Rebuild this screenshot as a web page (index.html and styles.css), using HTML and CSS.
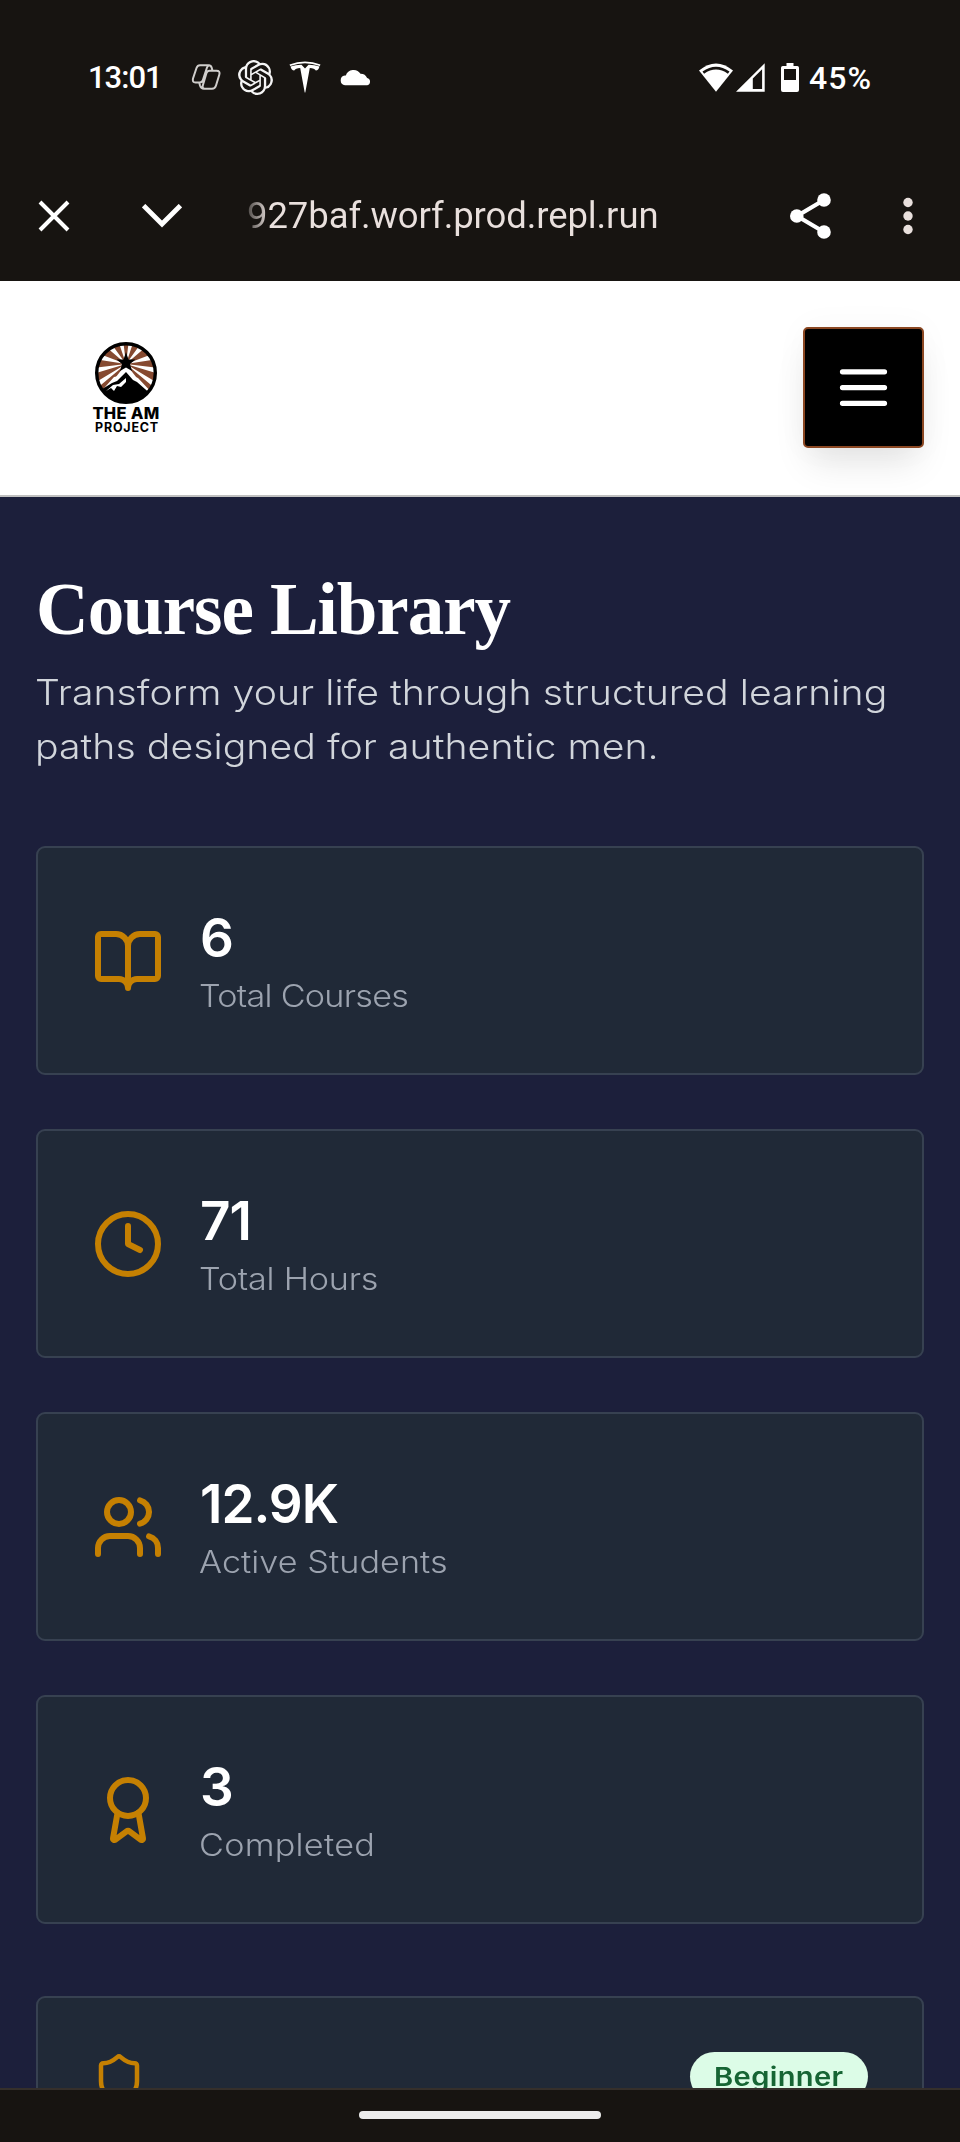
FILE: index.html
```html
<!DOCTYPE html>
<html lang="en">
<head>
<meta charset="utf-8">
<title>Course Library</title>
<link rel="stylesheet" href="styles.css">
</head>
<body>
<div class="screen">
  <div class="status">
    <span class="time">13:01</span>
    <svg class="st-copilot" width="30" height="28" viewBox="0 0 30 28" fill="none" stroke="#d0cecc" stroke-width="2" stroke-linejoin="round"><path d="M9 2.200h8.500q2.500 0 3.200 2.500l.8 3M9 2.200Q6.500 2.200 5.500 5L2 15.500q-1 4 2.500 4h4.200q2.400 0 3.200-2.500L16 4.500q.8-2.300 2.500-2.300M21.500 7.700h4q4 0 2.800 4L25 22.500q-1 3.300-4 3.300h-8q-3 0-4-3.300l-.8-3M21.500 7.700h-3q-2.300 0-3.100 2.500L11.800 22.500q-.8 3 1.700 3.300"/></svg>
    <svg class="st-openai" width="35" height="35" viewBox="0 0 24 24" fill="#f4f4f4"><path d="M22.282 9.821a5.985 5.985 0 0 0-.516-4.910 6.046 6.046 0 0 0-6.510-2.900A6.065 6.065 0 0 0 4.981 4.182a5.985 5.985 0 0 0-3.998 2.900 6.046 6.046 0 0 0 .743 7.097 5.980 5.980 0 0 0 .511 4.911 6.051 6.051 0 0 0 6.515 2.900A5.985 5.985 0 0 0 13.260 24a6.056 6.056 0 0 0 5.772-4.206 5.989 5.989 0 0 0 3.998-2.900 6.056 6.056 0 0 0-.748-7.073zm-9.022 12.608a4.476 4.476 0 0 1-2.876-1.041l.142-.080 4.778-2.758a.795.795 0 0 0 .393-.681v-6.737l2.020 1.169a.071.071 0 0 1 .038.052v5.583a4.504 4.504 0 0 1-4.495 4.494zm-9.661-4.125a4.471 4.471 0 0 1-.535-3.014l.142.085 4.783 2.758a.771.771 0 0 0 .781 0l5.843-3.369v2.332a.080.080 0 0 1-.033.062L9.740 19.950a4.499 4.499 0 0 1-6.141-1.646zM2.341 7.896a4.485 4.485 0 0 1 2.366-1.973V11.600a.766.766 0 0 0 .388.677l5.814 3.354-2.020 1.169a.076.076 0 0 1-.071 0l-4.830-2.787A4.504 4.504 0 0 1 2.341 7.872zm16.596 3.856L13.104 8.364 15.119 7.200a.076.076 0 0 1 .071 0l4.830 2.791a4.494 4.494 0 0 1-.677 8.104v-5.677a.790.790 0 0 0-.407-.667zm2.011-3.023l-.142-.085-4.774-2.782a.776.776 0 0 0-.785 0L9.409 9.230V6.897a.066.066 0 0 1 .028-.062l4.830-2.787a4.499 4.499 0 0 1 6.680 4.660zM8.307 12.863l-2.020-1.164a.080.080 0 0 1-.038-.057V6.074a4.499 4.499 0 0 1 7.376-3.454l-.142.081L8.704 5.459a.795.795 0 0 0-.393.681zm1.097-2.365l2.602-1.500 2.607 1.500v2.999l-2.597 1.500-2.607-1.500Z"/></svg>
    <svg class="st-tesla" width="32" height="32" viewBox="0 0 32 32" fill="#fff"><path d="M.5 3.500Q16-2.300 31.500 3.500L30.800 5Q16-.4 1.200 5ZM1.500 5.500Q7 3.700 12.500 3.800L16 7.500l3.500-3.700Q25 3.700 30.500 5.500q-1 3.800-3.700 4Q25.500 7.400 20.800 7L16.300 31.500h-.6L11.200 7Q6.500 7.400 5.200 9.500 2.500 9.300 1.500 5.500Z"/></svg>
    <svg class="st-cloud" width="32" height="18" viewBox="0 0 32 18" fill="#fff"><path d="M5 17.300a4.900 4.900 0 0 1-.2-9.700h1A8.200 8.200 0 0 1 20.500 5.800a7 7 0 0 1 6.600 4.300 3.700 3.700 0 0 1 .2 7.200Z"/></svg>
    <svg class="st-wifi" width="34" height="29" viewBox="0 0 34 29"><path fill="#fff" d="M0 7.500Q17-6.500 34 7.500L17 28.700Z"/><path fill="none" stroke="#171411" stroke-width="2.800" d="M4.300 9.600Q17 .6 29.700 9.600"/></svg>
    <svg class="st-signal" width="29" height="29" viewBox="0 0 29 29"><path fill="#fff" fill-rule="evenodd" d="M28.700.2V28.700H0ZM16.800 15.400V26h9.300V6.300Z"/></svg>
    <svg class="st-batt" width="18" height="29" viewBox="0 0 18 29"><path fill="#fff" fill-rule="evenodd" d="M5.500 0h7v3h3.700q1.800 0 1.800 1.800v22.200q0 2-2 2H2q-2 0-2-2V4.800Q0 3 1.800 3h3.700ZM3 6v11h12V6Z"/></svg>
    <span class="pct">45%</span>
  </div>

  <div class="toolbar">
    <svg class="tb-close" width="32" height="32" viewBox="0 0 32 32" stroke="#fff" stroke-width="4" fill="none"><path d="M2 2l28 28M30 2L2 30"/></svg>
    <svg class="tb-down" width="40" height="24" viewBox="0 0 40 24" stroke="#fff" stroke-width="4.800" fill="none"><path d="M1.600 1.600L20 20l18.400-18.400"/></svg>
    <span class="url">927baf.worf.prod.repl.run</span>
    <svg class="tb-share" width="41" height="46" viewBox="0 0 41 46" fill="#fff"><path d="M34 7L7 23l27 16" fill="none" stroke="#fff" stroke-width="4.200"/><circle cx="34" cy="7" r="6.800"/><circle cx="6.800" cy="23" r="6.800"/><circle cx="34" cy="39" r="6.800"/></svg>
    <svg class="tb-more" width="10" height="38" viewBox="0 0 10 38" fill="#e9e0dd"><circle cx="5" cy="5.500" r="4.700"/><circle cx="5" cy="19" r="4.700"/><circle cx="5" cy="32.500" r="4.700"/></svg>
  </div>

  <header class="header">
    <div class="logo">
      <svg width="64" height="64" viewBox="-32 -32 64 64">
        <defs><clipPath id="disc"><circle r="29"/></clipPath></defs>
        <circle r="29" fill="#fff"/>
        <g clip-path="url(#disc)">
          <path fill="#864a31" d="M0-9L-3-34H3ZM0-9L8-33 16-31ZM0-9L-8-33-16-31ZM0-9L21-27 29-20ZM0-9L-21-27-29-20ZM0-9L33-14V-5ZM0-9L-33-14V-5ZM0-9L33 1V11ZM0-9L-33 1V11ZM0-9L31 17 24 22ZM0-9L-31 17-24 22Z"/>
          <path fill="#fff" d="M-30 24L-12 4-7 3 0-5 7 3 12 5 30 24Z"/>
          <path fill="#000" d="M-32 30L-27 18-14 10-9 8 0-1 7 7 11 9 27 23 20 34-20 34Z"/>
          <path fill="#fff" d="M-20 18L-13 12-7 11 0 5V9L-5 14-9 13-12 18-15 15Z"/>
          <path fill="#000" d="M0-21L2.500-13.500H9.500L4-9 6-2 0-5.500-6-2-4-9-9.500-13.500H-2.500Z"/>
        </g>
        <circle r="29.300" fill="none" stroke="#000" stroke-width="3.400"/>
      </svg>
      <span class="logo-a">THE AM</span>
      <span class="logo-b">PROJECT</span>
    </div>
    <button class="menu" aria-label="Menu">
      <svg width="63" height="63" viewBox="0 0 24 24" fill="none" stroke="#fff" stroke-width="2" stroke-linecap="round"><path d="M4 6h16M4 12h16M4 18h16"/></svg>
    </button>
  </header>

  <main class="main">
    <h1 class="title">Course Library</h1>
    <p class="lead"><span class="wide">Transform your life through structured learning</span><br><span class="wide">paths designed for authentic men.</span></p>

    <section class="stats">
      <div class="card stat">
        <svg class="icon" viewBox="0 0 24 24"><path d="M12 7v14M3 18a1 1 0 0 1-1-1V4a1 1 0 0 1 1-1h5a4 4 0 0 1 4 4 4 4 0 0 1 4-4h5a1 1 0 0 1 1 1v13a1 1 0 0 1-1 1h-6a3 3 0 0 0-3 3 3 3 0 0 0-3-3z"/></svg>
        <div><div class="num">6</div><div class="label wide label-courses">Total Courses</div></div>
      </div>
      <div class="card stat">
        <svg class="icon" viewBox="0 0 24 24"><circle cx="12" cy="12" r="10"/><path d="M12 6v6l4 2"/></svg>
        <div><div class="num">71</div><div class="label wide label-hours">Total Hours</div></div>
      </div>
      <div class="card stat">
        <svg class="icon" viewBox="0 0 24 24"><path d="M16 21v-2a4 4 0 0 0-4-4H6a4 4 0 0 0-4 4v2"/><circle cx="9" cy="7" r="4"/><path d="M22 21v-2a4 4 0 0 0-3-3.870M16 3.130a4 4 0 0 1 0 7.750"/></svg>
        <div><div class="num">12.9K</div><div class="label wide label-students">Active Students</div></div>
      </div>
      <div class="card stat">
        <svg class="icon" viewBox="0 0 24 24"><path d="m15.477 12.890 1.515 8.526a.5.5 0 0 1-.81.470l-3.580-2.687a1 1 0 0 0-1.197 0l-3.586 2.686a.5.5 0 0 1-.81-.469l1.514-8.526"/><circle cx="12" cy="8" r="6"/></svg>
        <div><div class="num">3</div><div class="label wide label-completed">Completed</div></div>
      </div>
    </section>

    <article class="card course">
      <svg class="icon icon-sm" viewBox="0 0 24 24"><path d="M20 13c0 5-3.500 7.500-7.660 8.950a1 1 0 0 1-.670-.010C7.500 20.500 4 18 4 13V6a1 1 0 0 1 1-1c2 0 4.500-1.200 6.240-2.720a1.170 1.170 0 0 1 1.520 0C14.510 3.810 17 5 19 5a1 1 0 0 1 1 1z"/></svg>
      <span class="badge"><span class="badge-text">Beginner</span></span>
    </article>
  </main>

  <footer class="navbar"><div class="handle"></div></footer>
</div>
</body>
</html>
```
FILE: styles.css
```css
* { box-sizing: border-box; }
body { margin: 0; background: #171411; }
svg { display: block; flex: none; }
.screen {
  width: 960px; height: 2142px; overflow: hidden;
  display: flex; flex-direction: column;
  background: #171411; font-family: Inter, "Liberation Sans", sans-serif;
}

/* phone status bar */
.status { height: 154px; flex: none; display: flex; align-items: center; padding: 0 87px 0 88px; color: #fff; }
.time, .pct { font: 500 31px/36px Roboto, sans-serif; white-space: nowrap; padding-top: 1px; }
.time { width: 103px; letter-spacing: -1px; }
.st-openai { margin-left: 17px; }
.st-tesla { margin-left: 16px; }
.st-cloud { margin-left: 19px; }
.st-wifi { margin-left: auto; }
.st-signal { margin-left: 3px; }
.st-batt { margin-left: 16px; }
.pct { width: 64px; margin-left: 10px; font-size: 32px; letter-spacing: 1px; }

/* browser toolbar */
.toolbar { height: 124px; margin-bottom: 3px; flex: none; display: flex; align-items: center; padding: 0 47px 0 38px; }
.tb-down { margin-left: 72px; }
.url {
  width: 420px; margin-left: 65px; font: 400 36.500px/44px Roboto, sans-serif; letter-spacing: -.1px; white-space: nowrap;
  color: transparent; background: linear-gradient(90deg, #4a4643 0, #e9e0dd 22px); background-clip: text; -webkit-background-clip: text;
}
.tb-share { margin-left: auto; }
.tb-more { margin-left: 72px; }

/* site header */
.header {
  height: 216px; flex: none; background: #fff; border-bottom: 2px solid #c0c0c0;
  display: flex; align-items: center; justify-content: space-between; padding: 0 36px 0 93px; overflow: hidden;
}
.logo { width: 66px; display: flex; flex-direction: column; align-items: center; color: #000; padding-bottom: 1px; }
.logo-a { font: 800 16.500px/14px Inter, sans-serif; margin-top: 1px; letter-spacing: .3px; white-space: nowrap; }
.logo-b { font: 700 12.500px/13px Inter, sans-serif; letter-spacing: .8px; margin: 1px 0 0 2px; white-space: nowrap; }
.menu {
  width: 121px; height: 121px; margin-bottom: 2px; padding: 0; background: #000; border: 2px solid #8b4722; border-radius: 5px;
  display: flex; align-items: center; justify-content: center;
  box-shadow: 0 22px 34px -7px rgba(0,0,0,.1), 0 0 34px rgba(0,0,0,.035);
}

/* page content */
.main { flex: 1; min-height: 0; overflow: hidden; background: #1c1f3b; padding: 72px 36px 0; }
.title { margin: 0; height: 81px; font: 700 73px/81px "Liberation Serif", serif; letter-spacing: -1.050px; color: #fff; white-space: nowrap; }
.lead { margin: 15px 0 0; height: 108px; font-size: 35px; line-height: 54px; letter-spacing: .04px; color: #d1d5db; white-space: nowrap; font-weight: 350; }
.wide { display: inline-block; margin-left: -1px; transform: scaleX(1.12); transform-origin: 0 50%; }
.stats { margin-top: 73px; display: flex; flex-direction: column; gap: 54px; }
.card { background: #202937; border: 2px solid #374151; border-radius: 9px; padding: 54px; }
.stat { height: 229px; display: flex; align-items: center; gap: 36px; }
.icon { width: 72px; height: 72px; fill: none; stroke: #c58002; stroke-width: 2; stroke-linecap: round; stroke-linejoin: round; }
.icon-sm { width: 54px; height: 54px; }
.num { font-size: 53px; line-height: 72px; font-weight: 620; letter-spacing: -1px; color: #fff; }
.label { display: block; font-size: 30.500px; line-height: 43px; height: 45px; font-weight: 340; color: #9ca3af; white-space: nowrap; }
.label-courses { letter-spacing: -.65px; }
.label-hours { letter-spacing: -.2px; }
.label-students { letter-spacing: .06px; }
.label-completed { letter-spacing: .25px; }
.course { margin-top: 72px; height: 400px; display: flex; justify-content: space-between; align-items: flex-start; }
.badge { width: 178px; height: 49px; border-radius: 25px; background: #dcfce7; color: #166534; font-size: 26px; line-height: 49px; font-weight: 570; text-align: center; }
.badge-text { display: inline-block; transform: scaleX(1.12); letter-spacing: .3px; }

/* gesture bar */
.navbar { height: 54px; flex: none; background: #171411; border-top: 2px solid #352f2b; display: flex; justify-content: center; padding-top: 21px; }
.handle { width: 242px; height: 8px; border-radius: 4px; background: #ececec; }
```
